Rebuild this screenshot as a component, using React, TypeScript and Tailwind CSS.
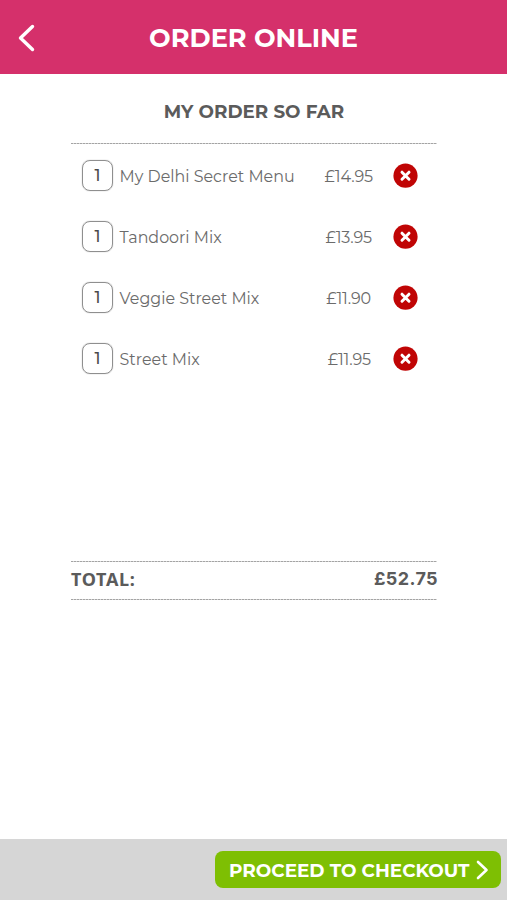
import clsx from 'clsx';

interface OrderItem {
  name: string;
  price: string;
  quantity: number;
  priceClass: string;
}

const items: OrderItem[] = [
  { name: 'My Delhi Secret Menu', price: '£14.95', quantity: 1, priceClass: 'mr-[20px]' },
  { name: 'Tandoori Mix', price: '£13.95', quantity: 1, priceClass: 'mr-[21px]' },
  { name: 'Veggie Street Mix', price: '£11.90', quantity: 1, priceClass: 'mr-[22px]' },
  { name: 'Street Mix', price: '£11.95', quantity: 1, priceClass: 'mr-[22px]' },
];

// Finer than a dashed border: 2px dashes with 1px lighter gaps
function Divider() {
  return (
    <div className="h-px bg-[repeating-linear-gradient(90deg,#a4a4a4_0,#a4a4a4_2px,#d4d4d4_2px,#d4d4d4_3px)]" />
  );
}

function RemoveIcon() {
  return (
    <svg width="25" height="25" viewBox="0 0 25 25" fill="none">
      <circle cx="12.5" cy="12.7" r="12.1" fill="#c00505" />
      <path d="M9 9.2l7 7M16 9.2l-7 7" stroke="#fff" strokeWidth="3" strokeLinecap="round" />
    </svg>
  );
}

function OrderRow({ item }: { item: OrderItem }) {
  return (
    <li className="flex h-[61px] items-center pr-[19px] pl-[11px] text-[#6b6b6b]">
      <span className="flex h-[31px] w-[31px] items-center justify-center rounded-[8px] border border-[#8f8f8f] pt-px text-base font-medium text-[#4a4a4a] shadow-[0_0_1px_#8f8f8f]">
        {item.quantity}
      </span>
      <span className="ml-[6.6px] pt-[2px] text-[15.9px] whitespace-nowrap">{item.name}</span>
      <span className={clsx('ml-auto pt-[2px] text-[16px] tracking-[-0.15px]', item.priceClass)}>{item.price}</span>
      <button aria-label="Remove">
        <RemoveIcon />
      </button>
    </li>
  );
}

export default function App() {
  return (
    <div className="flex h-[900px] w-[507px] flex-col bg-white font-['Montserrat','Inter',sans-serif]">
      <header className="flex h-[74px] items-center justify-between bg-[#d5306b] px-[18px] text-white">
        <svg className="mt-[2px]" width="18" height="28" viewBox="0 0 18 28" fill="none">
          <path d="M14.5 2.5L2.5 14l12 11.5" stroke="#fff" strokeWidth="3.4" strokeLinecap="round" strokeLinejoin="round" />
        </svg>
        <h1 className="mt-[2px] text-[25.6px] font-bold whitespace-nowrap">ORDER ONLINE</h1>
        <span className="w-[18px]" />
      </header>

      <main className="flex flex-1 flex-col pr-[70px] pl-[71px] text-[#5b5b5b]">
        <h2 className="flex h-[69px] items-center justify-center pt-[6px] text-[18.3px] font-bold">
          MY ORDER SO FAR
        </h2>
        <Divider />
        <ul className="h-[417px] pt-px">
          {items.map((item) => (
            <OrderRow key={item.name} item={item} />
          ))}
        </ul>
        <Divider />
        <div className="flex h-[37px] items-center justify-between">
          <span className="mb-[2px] font-['Noto_Sans',sans-serif] text-[18px] font-bold tracking-[0.7px]">TOTAL:</span>
          <span className="-mr-px mb-[4px] font-['Inter',sans-serif] text-[18px] font-bold tracking-[0.4px]">£52.75</span>
        </div>
        <Divider />
      </main>

      <footer className="flex h-[61px] items-center justify-end bg-[#d6d6d6] pr-[6px]">
        <button className="flex h-[37px] w-[286px] items-center justify-between rounded-[8px] bg-[#7ebf03] pr-[12px] pl-[14px] text-[18.4px] font-bold whitespace-nowrap text-white">
          <span className="pt-[2px]">PROCEED TO CHECKOUT</span>
          <svg width="14" height="20" viewBox="0 0 14 20" fill="none">
            <path d="M3 2l8.5 8L3 18" stroke="#fff" strokeWidth="2.6" strokeLinecap="round" strokeLinejoin="round" />
          </svg>
        </button>
      </footer>
    </div>
  );
}
